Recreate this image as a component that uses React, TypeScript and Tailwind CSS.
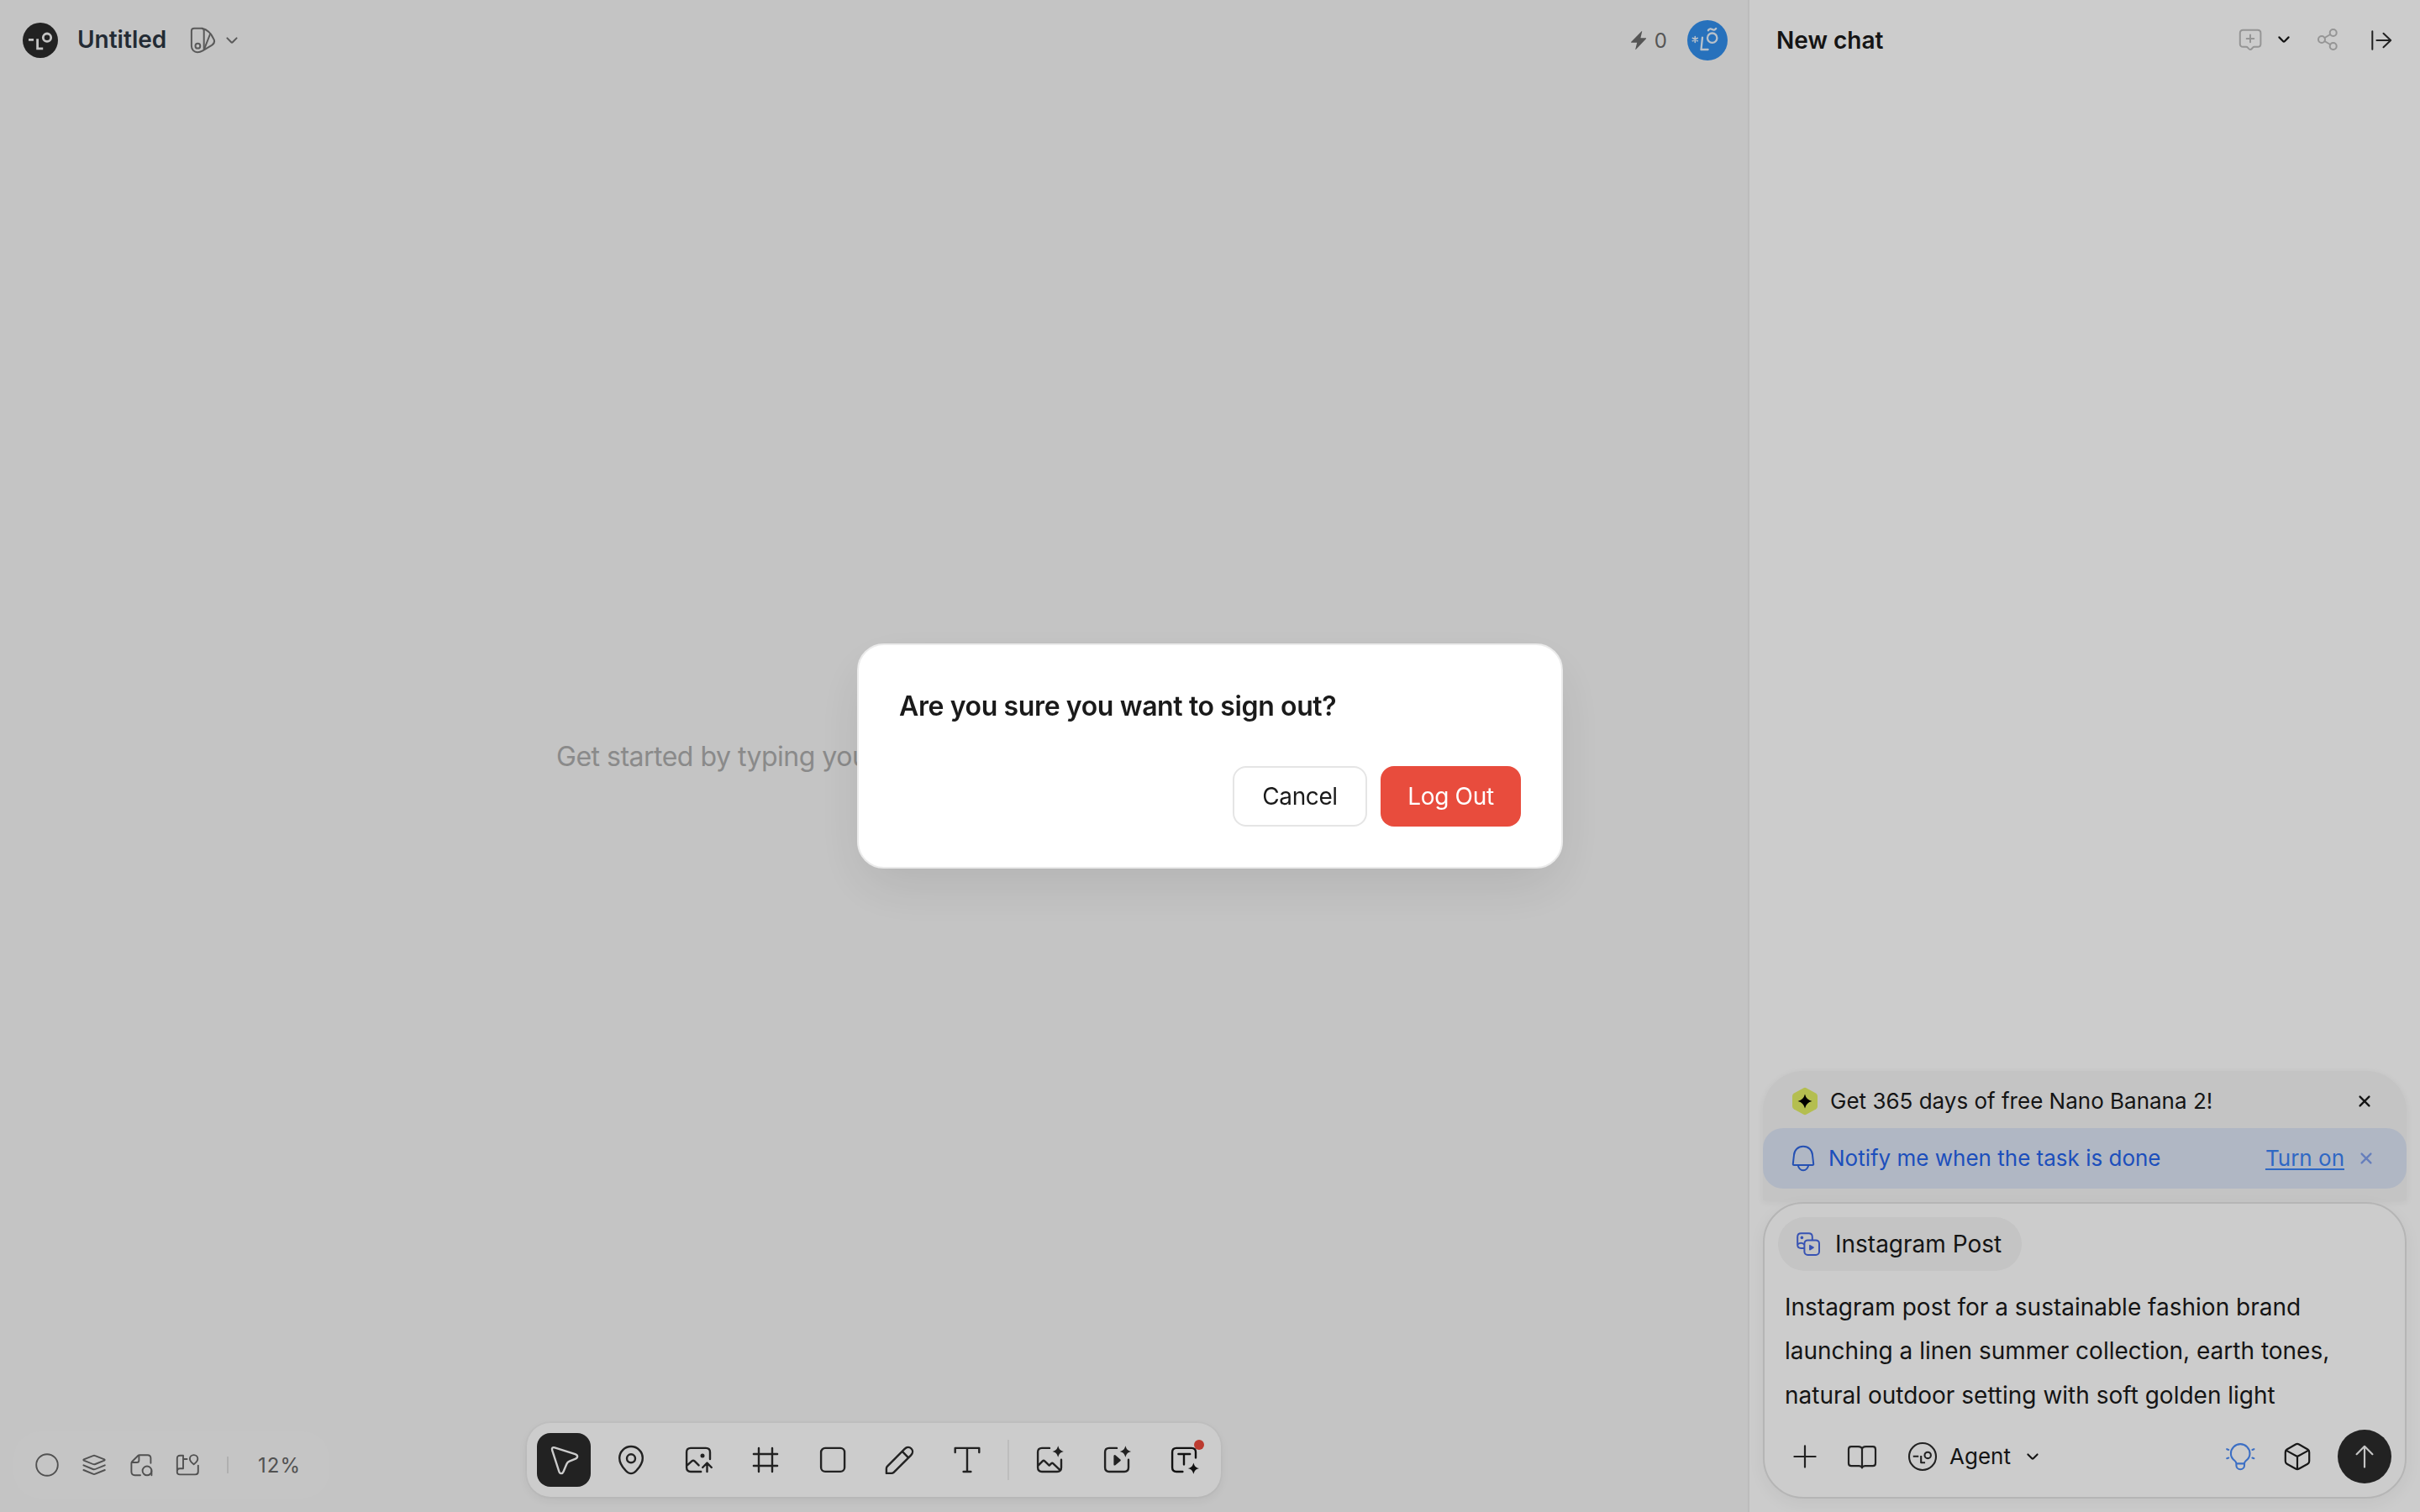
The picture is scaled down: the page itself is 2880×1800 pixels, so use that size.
import type { ReactNode } from "react";

const SPARK =
  "c1.5 4.4 2.3 5.2 6.7 6.7c-4.4 1.5-5.2 2.3-6.7 6.7c-1.5-4.4-2.3-5.2-6.7-6.7c4.4-1.5 5.2-2.3 6.7-6.7z";

function Icon({
  box,
  className,
  sw = 2,
  children,
}: {
  box: number;
  className: string;
  sw?: number;
  children: ReactNode;
}) {
  return (
    <svg
      viewBox={`0 0 ${box} ${box}`}
      className={`block shrink-0 overflow-visible ${className}`}
      fill="none"
      stroke="currentColor"
      strokeWidth={sw}
      strokeLinecap="round"
      strokeLinejoin="round"
    >
      {children}
    </svg>
  );
}

function Chevron({ className, sw = 2 }: { className: string; sw?: number }) {
  return (
    <Icon box={16} className={`size-4 ${className}`} sw={sw}>
      <path d="M2.4 5.4 7.2 10.2Q8 11 8.8 10.2L13.6 5.4" />
    </Icon>
  );
}

function Close({ className }: { className: string }) {
  return (
    <Icon box={16} className={`size-4 ${className}`} sw={2.4}>
      <path d="M2.6 2.6 13.4 13.4M13.4 2.6 2.6 13.4" />
    </Icon>
  );
}

function Tool({ active = false, dot = false, children }: { active?: boolean; dot?: boolean; children: ReactNode }) {
  return (
    <button
      className={
        active
          ? "relative flex size-16 items-center justify-center rounded-2xl bg-[#2b2b2b] text-white"
          : "relative flex size-16 items-center justify-center rounded-2xl text-[#2b2b2b]"
      }
    >
      <Icon box={40} className="size-10" sw={2.4}>
        {children}
      </Icon>
      {dot && <span className="absolute top-2 right-2 size-3 rounded-full bg-[#ec4a3c]" />}
    </button>
  );
}

function CanvasHeader() {
  return (
    <header className="flex h-24 items-center pr-6 pl-[27px]">
      <svg viewBox="0 0 42 42" className="size-[42px] shrink-0" fill="none" stroke="#f5f5f5" strokeWidth="2.8">
        <circle cx="21" cy="21" r="21" fill="#2b2b2b" stroke="none" />
        <path d="M7 20.3H13M17.6 19.3V30.9H24.2" />
        <circle cx="29" cy="17.7" r="4.7" />
      </svg>
      <h1 className="mb-0.5 ml-[23px] text-[28px] leading-10 font-semibold text-[#2c3642]">Untitled</h1>
      <Icon box={32} className="ml-7 size-8 text-[#717171]" sw={2}>
        <path d="M16.7 27V4.6Q16.7 1.7 13.6 1.7H5Q1.9 1.7 1.9 4.8V22.8C1.9 27 5 30.2 9 30.2C11.5 30.2 13 29.6 15.2 28.3L26 21.8C29.4 19.6 30 17.4 28.2 14.2C26 9.6 21.6 3.4 14.6 1.8" />
        <path d="M24.3 8 17 26.6" />
        <circle cx="9.4" cy="22.7" r="2.9" />
      </Icon>
      <Chevron className="ml-[10px] text-[#717171]" />
      <div className="ml-auto flex items-center">
        <svg viewBox="0 0 20 24" className="h-6 w-5 text-[#6b6b6b]" fill="currentColor">
          <path d="M13.6 1.3C14 .8 14.3 1 14.2 1.6L12.4 9.2H18.4C19.2 9.2 19.3 9.7 18.9 10.2L7 22.7C6.5 23.2 6.2 23 6.3 22.4L8.2 14.8H1.8C1 14.8.9 14.3 1.3 13.8Z" />
        </svg>
        <span className="mt-0.5 ml-[9px] text-[24px] leading-8 text-[#6b6b6b]">0</span>
        <svg
          viewBox="0 0 48 48"
          className="ml-[24px] size-12"
          fill="none"
          stroke="#e8f2fd"
          strokeWidth="2.3"
          strokeLinecap="round"
          strokeLinejoin="round"
        >
          <circle cx="24" cy="24" r="24" fill="#318eec" stroke="none" />
          <path strokeWidth="1.6" d="M9.3 19.6V26.4M6.3 21.3 12.3 24.7M12.3 21.3 6.3 24.7" />
          <path d="M18 20.6 16.5 35H24.6" />
          <circle cx="29.7" cy="21.2" r="5.7" />
          <path d="M25 12.2C26.4 9.8 28.2 10.2 29.7 11.1C31.2 12 33 12 34.2 9.9" />
        </svg>
      </div>
    </header>
  );
}

function ViewControls() {
  return (
    <div className="flex h-20 w-[376px] items-center rounded-[32px] bg-[#f7f7f7] pl-6 text-[#666666]">
      <div className="flex items-center gap-6">
        <Icon box={32} className="size-8" sw={1.9}>
          <circle cx="16" cy="16" r="12.8" />
        </Icon>
        <Icon box={32} className="size-8" sw={1.9}>
          <path d="M3.8 9.4 14.6 5.1Q16 4.5 17.4 5.1L28.2 9.4Q29.2 10 28.2 10.6L17.4 15Q16 15.6 14.6 15L3.8 10.6Q2.8 10 3.8 9.4Z" />
          <path d="M3.4 16.3 14.6 21Q16 21.6 17.4 21L28.8 16.3M3.4 22 14.6 26.7Q16 27.3 17.4 26.7L28.8 22" />
        </Icon>
        <Icon box={32} className="size-8" sw={1.9}>
          <path d="M27.4 13.8V8Q27.4 4.2 23.6 4.2H14Q13 4.2 12.2 5L5.2 12Q4.4 12.8 4.4 13.8V24Q4.4 28.2 8.4 28.2H15" />
          <path d="M13.4 5V10.4Q13.4 13 10.8 13H5.2M28.4 28.2V22.9" />
          <circle cx="23" cy="22.9" r="5.4" />
        </Icon>
        <Icon box={32} className="size-8" sw={1.9}>
          <path d="M10 20V4.8H6.4Q2.8 4.8 2.8 8.4V24.6Q2.8 27.4 6 27.4H24.4Q27.8 27.4 27.8 24V16.6M2.8 23.4Q2.8 20.3 6 20.3H10M10.2 9H14.6" />
          <path d="M22.6 15.3C19.6 13 17.9 11.2 17.9 8.8A4.6 4.6 0 0 1 27.3 8.8C27.3 11.2 25.6 13 22.6 15.3Z" />
        </Icon>
      </div>
      <span className="ml-[30px] h-5 w-0.5 bg-[#dcdcdc]" />
      <span className="mt-0.5 ml-[35px] text-[24px] leading-8 tracking-[1px]">12%</span>
    </div>
  );
}

function Toolbar() {
  return (
    <div className="mb-0.5 flex h-[88px] items-center gap-4 rounded-[28px] bg-white px-3 shadow-[0_0_0_2px_rgba(0,0,0,0.02),0_4px_12px_rgba(0,0,0,0.06)]">
      <Tool active>
        <path d="M6.2 8.6C5.3 5.8 6.7 4.6 9.2 5.4L33.6 13.2C36.9 14.4 36.9 17.4 34 18.6L26.6 21.6C25 22.3 24 23.3 23.3 24.9L19.5 34C18.4 36.8 15.3 36.8 14.4 34Z" />
      </Tool>
      <Tool>
        <path d="M20 36.1C17.6 36.1 15.4 34.6 13.2 32.2C8.6 27.4 6.2 22.6 6.2 17.8A13.8 13.8 0 0 1 33.8 17.8C33.8 22.6 31.4 27.4 26.8 32.2C24.6 34.6 22.4 36.1 20 36.1Z" />
        <circle cx="20" cy="18.3" r="5" />
      </Tool>
      <Tool>
        <path d="M34 19V10.8Q34 5.9 29.1 5.9H11Q6.1 5.9 6.1 10.8V29.1Q6.1 34 11 34H23.2M6.6 26.6 12.4 21.4Q14 20 15.6 21.4L20.6 26.4M30.5 34V23.6M25.2 29 30.5 23.6 35.8 29" />
        <circle cx="25" cy="15" r="2.5" fill="currentColor" stroke="none" />
      </Tool>
      <Tool>
        <path d="M12 5.9V34M28 5.9V34M5.9 13H34.1M5.9 27H34.1" />
      </Tool>
      <Tool>
        <rect x="6.1" y="5.9" width="28" height="28" rx="5" />
      </Tool>
      <Tool>
        <path d="M3.9 35.9V30.3Q3.9 28.7 5 27.6L25.6 6.8C28 4.4 31.4 4.4 33.5 6.5C35.6 8.6 35.6 11.9 33.2 14.3L12.6 34.8Q11.5 35.9 9.9 35.9ZM23 10.2 29.8 17.2" />
      </Tool>
      <Tool>
        <path d="M5.7 11V5.9H34.3V11M20 6V34M15.6 34H24.4" />
      </Tool>
      <span className="h-12 w-0.5 bg-[#ededed]" />
      <Tool>
        <path d="M20 5.9H11Q6.1 5.9 6.1 10.8V29.1Q6.1 34 11 34H29.1Q34 34 34 29.1V19.8M6.6 26.6 11.8 21.3Q13 20.2 14.2 21.3L19.7 26.6 22 24.4Q23.2 23.3 24.4 24.4L32.6 32.2" />
        <path d={`M30.2 3.3${SPARK}`} fill="currentColor" stroke="none" />
      </Tool>
      <Tool>
        <path d="M20 5.9H11Q6.1 5.9 6.1 10.8V29.1Q6.1 34 11 34H29.1Q34 34 34 29.1V19.8" />
        <path d="M17.6 15.2V25.4L23.6 20.3Z" fill="currentColor" />
        <path d={`M30.4 3.3${SPARK}`} fill="currentColor" stroke="none" />
      </Tool>
      <Tool dot>
        <g stroke="#161616">
          <path d="M34 17.4V10.8Q34 5.9 29.1 5.9H11Q6.1 5.9 6.1 10.8V29.1Q6.1 34 11 34H18.4M13.4 13H27.2M20 13V25.4" />
        </g>
        <path d={`M31.4 23.4${SPARK}`} fill="#161616" stroke="none" />
      </Tool>
    </div>
  );
}

function ChatHeader() {
  return (
    <header className="flex h-24 items-center pr-[30px] pl-[32px]">
      <h2 className="text-[28px] leading-10 font-semibold text-[#1a1a1a]">New chat</h2>
      <Icon box={32} className="ml-auto size-8 text-[#bbbbbb]" sw={2}>
        <path d="M16 27Q15 27 14.2 26L13.2 24.8Q12.4 23.8 11 23.8H7.4Q3.8 23.8 3.8 20.2V7.4Q3.8 3.8 7.4 3.8H24.8Q28.4 3.8 28.4 7.4V20.2Q28.4 23.8 24.8 23.8H21Q19.6 23.8 18.8 24.8L17.8 26Q17 27 16 27ZM16 9.6V18.2M11.7 13.9H20.3" />
      </Icon>
      <Chevron className="mb-0.5 ml-4 text-[#1a1a1a]" sw={2.2} />
      <Icon box={32} className="ml-[29px] size-8 text-[#bbbbbb]" sw={2}>
        <circle cx="8" cy="15" r="4" />
        <circle cx="21.7" cy="7" r="4" />
        <circle cx="21.7" cy="23" r="4" />
        <path d="M11.5 13 18.2 9M11.5 17 18.2 21" />
      </Icon>
      <Icon box={32} className="ml-[31px] size-8 text-[#2b2b2b]" sw={2}>
        <path d="M5.3 5.2V26.8M10.4 16H27.2M18.5 7.8 27.2 16 18.5 24.2" />
      </Icon>
    </header>
  );
}

function Notices() {
  return (
    <div className="mx-4 mb-[2px] h-[154px] rounded-t-[48px] bg-[#f5f5f5] shadow-[0_2px_8px_rgba(0,0,0,0.06)]">
      <div className="flex h-[68px] items-center pt-1 pr-[42px] pl-[34px]">
        <svg viewBox="0 0 32 34" className="h-[34px] w-8">
          <path
            d="M14 1.4Q16 .3 18 1.4L29 7.6Q31 8.8 31 11V23Q31 25.2 29 26.4L18 32.6Q16 33.7 14 32.6L3 26.4Q1 25.2 1 23V11Q1 8.8 3 7.6Z"
            fill="#e1ee64"
          />
          <path d="M16 8.6Q17.6 15.4 24.4 17Q17.6 18.6 16 25.4Q14.4 18.6 7.6 17Q14.4 15.4 16 8.6Z" fill="#000000" />
        </svg>
        <span className="ml-[14px] text-[26px] leading-9 text-[#1a1a1a]">Get 365 days of free Nano Banana 2!</span>
        <Close className="ml-auto text-[#1a1a1a]" />
      </div>
      <div className="flex h-[72px] items-center rounded-3xl bg-[#dde5f5] pr-10 pl-8">
        <Icon box={32} className="size-8 text-[#2f66e0]" sw={2}>
          <path d="M16 1.8C9.6 1.8 5.4 6.2 5 12L3.8 22.6Q3.6 24 5 24H27Q28.4 24 28.2 22.6L27 12C26.6 6.2 22.4 1.8 16 1.8ZM9.8 24.4C10.6 28 12.8 30.2 16 30.2S21.4 28 22.2 24.4" />
        </Icon>
        <span className="ml-[14px] text-[26px] leading-9 text-[#2563eb]">Notify me when the task is done</span>
        <button className="ml-auto text-[26px] leading-9 text-[#3b82f6] underline decoration-2 underline-offset-[3px]">
          Turn on
        </button>
        <Close className="ml-[18px] text-[#809fec]" />
      </div>
    </div>
  );
}

function Composer() {
  return (
    <div className="mx-4 mb-4 flex h-[353px] flex-col rounded-[48px] border-2 border-[#e3e3e3] bg-white shadow-[0_6px_20px_rgba(0,0,0,0.05)]">
      <div className="mt-4 ml-4 flex h-16 w-[290px] items-center rounded-full bg-[#f5f5f5] pl-5">
        <Icon box={32} className="size-8 text-[#4668e0]" sw={2}>
          <path d="M11 20.9H7.4Q3.2 20.9 3.2 16.7V7.5Q3.2 3.3 7.4 3.3H16.6Q20.8 3.3 20.8 7.5V11M3.6 16.2Q7.4 13.4 11 16.2" />
          <rect x="11.4" y="11.4" width="17.6" height="17.6" rx="4" />
          <circle cx="8.4" cy="8.4" r="1.8" fill="currentColor" stroke="none" />
          <path d="M17.8 17.6V22.8L22.2 20.2Z" fill="currentColor" strokeWidth="1.4" />
        </Icon>
        <span className="ml-4 text-[28px] leading-10 text-[#1a1a1a]">Instagram Post</span>
      </div>
      <p className="mt-[17px] ml-6 text-[28px] leading-[52.4px] whitespace-nowrap text-[#1a1a1a]">
        Instagram post for a sustainable fashion brand
        <br />
        launching a linen summer collection, earth tones,
        <br />
        natural outdoor setting with soft golden light
      </p>
      <div className="mt-auto mb-4 flex h-16 items-center pr-4 pl-[30px]">
        <Icon box={36} className="size-9 text-[#2b2b2b]" sw={2.2}>
          <path d="M18 5.4V30.6M5.4 18H30.6" />
        </Icon>
        <Icon box={36} className="ml-8 size-9 text-[#2b2b2b]" sw={2.2}>
          <path d="M18 31.4Q18 29.6 14.4 29.2H5.2Q2 29.2 2 26V9.4Q2 6.2 5.2 6.2H13.2Q18 6.2 18 9.6Q18 6.2 22.8 6.2H30.8Q34 6.2 34 9.4V26Q34 29.2 30.8 29.2H21.6Q18 29.6 18 31.4V9.6" />
        </Icon>
        <Icon box={36} className="ml-9 size-9 text-[#2b2b2b]" sw={2.1}>
          <circle cx="18" cy="18" r="16" />
          <path d="M7.8 17.7H12.2M16.2 18V25.2H20" strokeLinecap="square" />
          <circle cx="24.2" cy="16.4" r="3.7" />
        </Icon>
        <span className="ml-[14px] text-[26px] leading-9 text-[#1a1a1a]">Agent</span>
        <Chevron className="ml-[18px] text-[#1a1a1a]" sw={2.1} />
        <Icon box={36} className="ml-auto size-9 text-[#4b8bf6]" sw={2.1}>
          <path d="M13.4 26.4Q13.4 24.4 11.6 23C8.6 20.6 6.9 18 6.9 14.4A11.3 11.3 0 0 1 29.5 14.4C29.5 18 27.8 20.6 24.8 23Q23 24.4 23 26.4V28.4A4.8 4.8 0 0 1 13.4 28.4ZM13.4 26.4H23M2.2 9.2 4.2 9.9M2.2 20.2 4.2 19.5M34.4 9.2 32.4 9.9M34.4 20.2 32.4 19.5" />
        </Icon>
        <Icon box={36} className="ml-8 size-9 text-[#1f1f1f]" sw={2.2}>
          <path d="M16 3.5Q18 2.4 20 3.5L30.4 9.5Q32.2 10.6 32.2 12.7V23.6Q32.2 25.7 30.4 26.7L20 32.5Q18 33.6 16 32.5L5.6 26.7Q3.8 25.7 3.8 23.6V12.7Q3.8 10.6 5.6 9.5ZM4.6 10.6 18 18 31.4 10.6M18 18V33" />
        </Icon>
        <button className="ml-[30px] flex size-16 items-center justify-center rounded-full bg-[#2b2b2b] text-[#f5f5f5]">
          <Icon box={36} className="size-9" sw={2.2}>
            <path d="M18 30.6V5.8M8.6 15.2 18 5.8 27.4 15.2" />
          </Icon>
        </button>
      </div>
    </div>
  );
}

function SignOutDialog() {
  return (
    <div className="fixed inset-0 flex items-center justify-center bg-black/20">
      <div
        role="dialog"
        className="h-[268px] w-[840px] rounded-[32px] border-2 border-[#ebebeb] bg-white px-12 pt-[49px] shadow-[0_24px_64px_-4px_rgba(0,0,0,0.09)]"
      >
        <h3 className="text-[32px] leading-12 font-semibold tracking-[-0.38px] text-[#1a1a1a]">
          Are you sure you want to sign out?
        </h3>
        <div className="mt-[47px] flex justify-end gap-4">
          <button className="h-[72px] w-[160px] rounded-2xl border-2 border-[#e5e5e5] text-[28px] tracking-[-0.4px] text-[#1a1a1a]">
            Cancel
          </button>
          <button className="h-[72px] w-[167px] rounded-2xl bg-[#e84c3d] text-[28px] tracking-[-0.3px] text-white">
            Log Out
          </button>
        </div>
      </div>
    </div>
  );
}

export default function App() {
  return (
    <div className="flex h-screen w-full overflow-hidden bg-[#f5f5f5] font-['Inter',sans-serif]">
      <main className="flex w-[2080px] flex-col">
        <CanvasHeader />
        <div className="flex flex-1 items-center pl-[662px]">
          <p className="mt-3 text-[32px] leading-12 tracking-[-0.5px] whitespace-nowrap text-[#adadad]">
            Get started by typing your
          </p>
        </div>
        <footer className="mb-4 grid grid-cols-[1fr_auto_1fr] items-end px-4">
          <ViewControls />
          <Toolbar />
        </footer>
      </main>
      <aside className="flex flex-1 flex-col border-l-2 border-[#ececec] bg-white">
        <ChatHeader />
        <div className="mt-auto">
          <Notices />
          <Composer />
        </div>
      </aside>
      <SignOutDialog />
    </div>
  );
}
